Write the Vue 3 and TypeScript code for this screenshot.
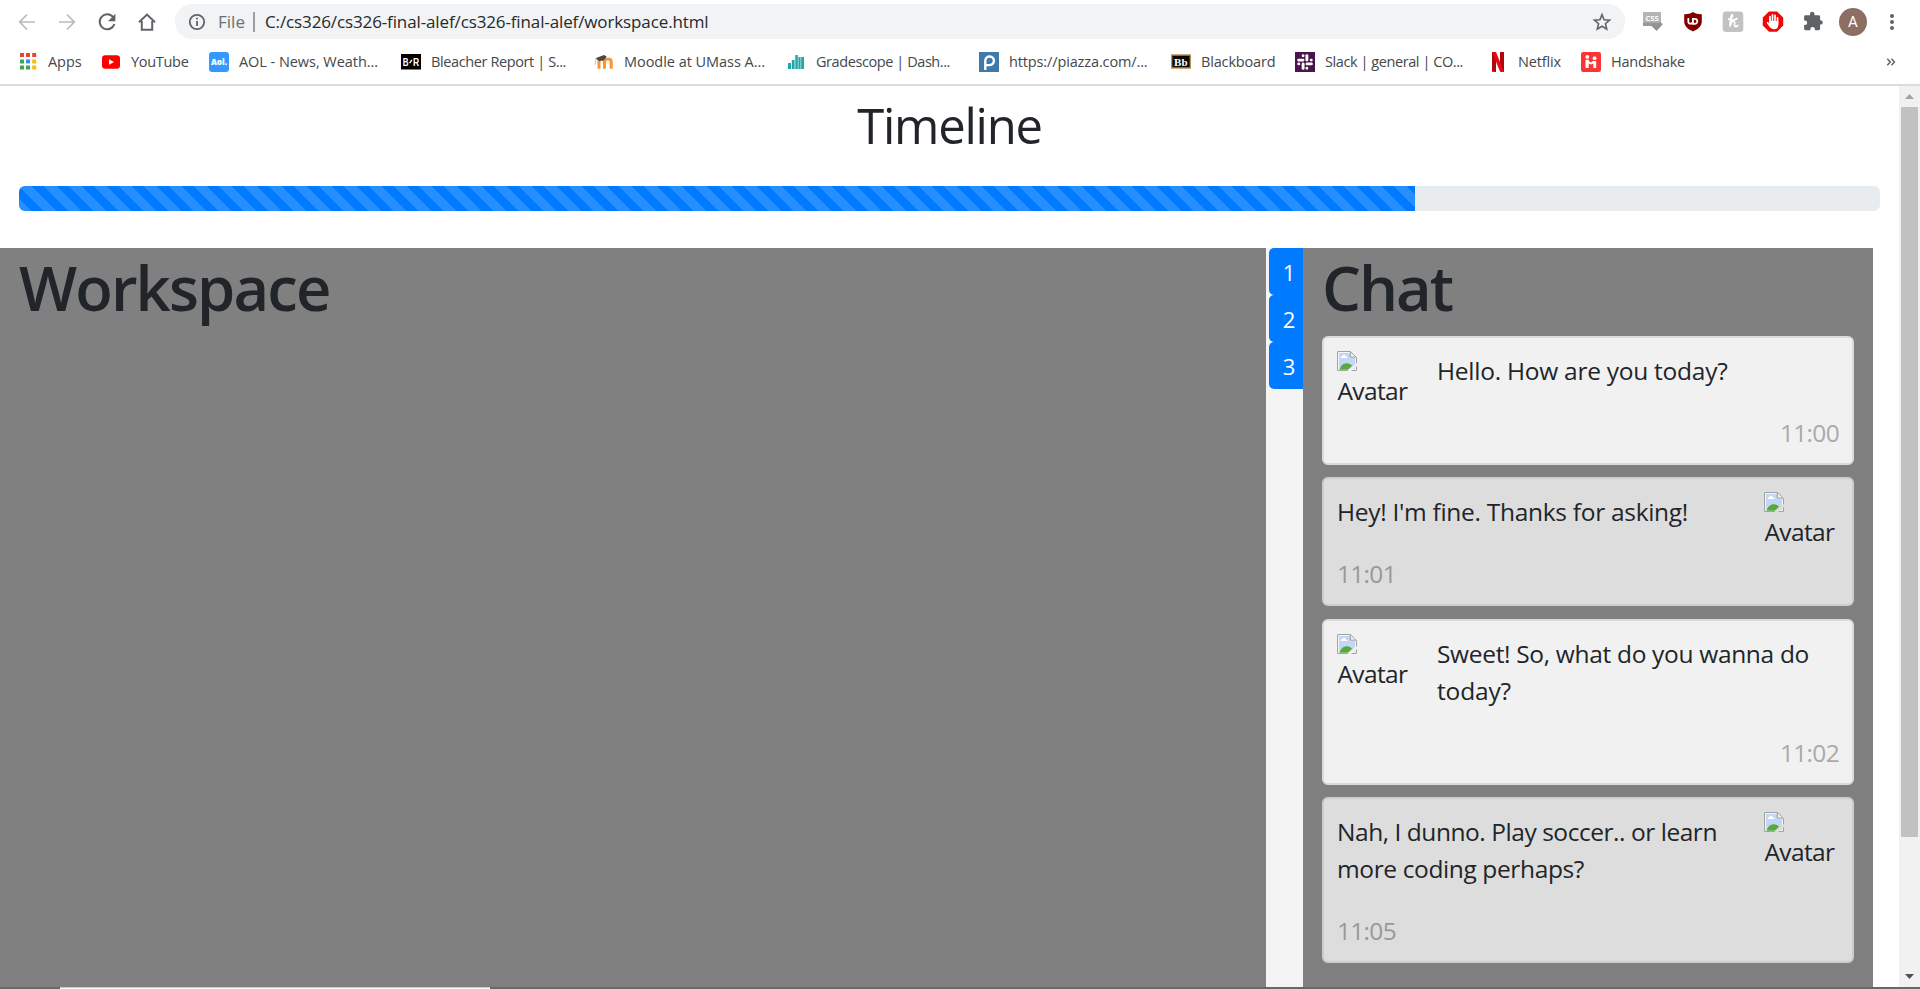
<script setup lang="ts">
interface Bookmark { icon: string; label: string; width: number }
interface Line { text: string; width: number }
interface Message { dark: boolean; time: string; lines: Line[] }

// Tracks the text so that the label occupies the given width.
const vFit = {
  mounted(el: HTMLElement, binding: { value: number }) {
    const natural = el.getBoundingClientRect().width
    const count = (el.textContent ?? '').trim().length
    el.style.letterSpacing = `${((binding.value - natural) / count).toFixed(3)}px`
  },
}

const bookmarks: Bookmark[] = [
  { icon: 'apps', label: 'Apps', width: 33.5 },
  { icon: 'youtube', label: 'YouTube', width: 57.5 },
  { icon: 'aol', label: 'AOL - News, Weath...', width: 139 },
  { icon: 'br', label: 'Bleacher Report | S...', width: 135 },
  { icon: 'moodle', label: 'Moodle at UMass A...', width: 141 },
  { icon: 'gradescope', label: 'Gradescope | Dash...', width: 134 },
  { icon: 'piazza', label: 'https://piazza.com/...', width: 138.5 },
  { icon: 'blackboard', label: 'Blackboard', width: 74.5 },
  { icon: 'slack', label: 'Slack | general | CO...', width: 138 },
  { icon: 'netflix', label: 'Netflix', width: 43 },
  { icon: 'handshake', label: 'Handshake', width: 74 },
]

const messages: Message[] = [
  { dark: false, time: '11:00', lines: [{ text: 'Hello. How are you today?', width: 290.5 }] },
  { dark: true, time: '11:01', lines: [{ text: "Hey! I'm fine. Thanks for asking!", width: 351 }] },
  {
    dark: false,
    time: '11:02',
    lines: [
      { text: 'Sweet! So, what do you wanna do', width: 372 },
      { text: 'today?', width: 74 },
    ],
  },
  {
    dark: true,
    time: '11:05',
    lines: [
      { text: 'Nah, I dunno. Play soccer.. or learn', width: 380 },
      { text: 'more coding perhaps?', width: 247 },
    ],
  },
]

const tabs = [1, 2, 3]
</script>

<template>
  <div class="window">
    <header class="chrome">
      <div class="toolbar">
        <nav class="nav">
          <svg viewBox="0 0 20 20" class="nav-icon off"><path d="M18 10H3M10 2.5L2.7 10l7.3 7.5" /></svg>
          <svg viewBox="0 0 20 20" class="nav-icon off"><path d="M2 10h15M10 2.5l7.3 7.5-7.3 7.5" /></svg>
          <svg viewBox="0 0 20 20" class="nav-icon"><path d="M16.200 5.200A7.500 7.500 0 1 0 17.400 12" /><path class="solid" d="M18.400 1.800v7.400H11z" /></svg>
          <svg viewBox="0 0 20 20" class="nav-icon"><path d="M2 10.200L10 2.600l8 7.600M4.800 9v8.800h10.400V9" /></svg>
        </nav>
        <div class="omnibox">
          <svg class="info" viewBox="0 0 18 18"><circle cx="9" cy="9" r="7.200" /><path d="M9 8v5M9 4.700v1.900" /></svg>
          <span class="scheme"><span v-fit="27">File</span></span>
          <span class="divider"></span>
          <span class="url"><span v-fit="443.5">C:/cs326/cs326-final-alef/cs326-final-alef/workspace.html</span></span>
          <svg class="star" viewBox="0 0 20 20"><path d="M10 2.600l2.100 5.100 5.500.4-4.200 3.600 1.300 5.400L10 14.200l-4.700 2.900 1.300-5.400-4.200-3.600 5.500-.4z" /></svg>
        </div>
        <div class="extensions">
          <svg viewBox="0 0 22 22"><path fill="#999" d="M1 1h18v12h-3v2H1z" /><path fill="#b5b5b5" d="M1 1h18v10.500H1z" /><text x="10" y="9.600" class="css-label">CSS</text><path d="M10.500 13.500l4 4 5-5.500" fill="none" stroke="#929292" stroke-width="3.400" /></svg>
          <svg viewBox="0 0 22 22"><path fill="#800000" d="M11 1c2.500 1.800 5.400 2.300 8.800 2.200v7.200c0 5-4.100 7.700-8.800 10-4.700-2.300-8.800-5-8.800-10V3.200c3.400.1 6.300-.4 8.800-2.200z" /><path fill="none" stroke="#fff" stroke-width="1.700" d="M6.300 7v3.400a2.300 2.300 0 0 0 4.600 0V7M11 7.800h1.800a2.500 2.500 0 0 1 0 5H11z" /></svg>
          <svg viewBox="0 0 22 22"><rect x=".7" y=".4" width="20.600" height="20.600" rx="3.500" fill="#c2c2c2" /><path fill="none" stroke="#fff" stroke-width="1.700" d="M6 8c3 .5 5-2 4.500-4C9.500 2.500 8 8 8 15.500c1-4 2.500-6 4-5.500s.2 3 .5 4.500 2.500 1.500 3.500-.5M8.500 9c3 .3 5-.3 7-1.800" /></svg>
          <svg viewBox="0 0 22 22"><path fill="#ed0707" d="M7 .4h8l6.200 6.200v8L15 20.800H7L.8 14.600v-8z" /><path fill="none" stroke="#fff" stroke-width="1.700" stroke-linecap="round" d="M8 12V5.500M10.500 11V3.800M13 11V4.300M15.500 13V6.800M8.300 15.300l-2.700-3.500" /><path fill="#fff" d="M7.200 10h9.100v4c0 2.800-1.500 4.300-4.200 4.300-2.500 0-3.800-1.400-4.900-3.300z" /></svg>
          <svg viewBox="0 0 22 22"><path fill="#5f6368" d="M8 4.300V3a2.200 2.200 0 0 1 4.400 0v1.300h4.300c.8 0 1.400.6 1.400 1.400v3.500h.5a2.200 2.200 0 0 1 0 4.400h-.5v4.200c0 .8-.6 1.400-1.400 1.400h-3.800v-.8a2.300 2.300 0 0 0-4.600 0v.8H3.500c-.8 0-1.400-.6-1.400-1.400V14h.8a2.300 2.300 0 0 0 0-4.600h-.8V5.700c0-.8.6-1.400 1.400-1.400z" /></svg>
        </div>
        <span class="profile">A</span>
        <span class="menu"><i></i><i></i><i></i></span>
      </div>

      <div class="bookmarks">
        <div v-for="b in bookmarks" :key="b.icon" class="bookmark">
          <svg viewBox="0 0 20 20" class="favicon">
            <g v-if="b.icon === 'apps'">
              <path fill="#ea4335" d="M2 1h4v4H2zM8 1h4v4H8zM14.200 1h4v4h-4z" />
              <path fill="#34a853" d="M2 7.400h4v4H2zM2 13.600h4v4H2zM8 13.600h4v4H8z" />
              <path fill="#4285f4" d="M8 7.400h4v4H8z" />
              <path fill="#fbbc05" d="M14.200 7.400h4v4h-4zM14.200 13.600h4v4h-4z" />
            </g>
            <g v-else-if="b.icon === 'youtube'"><rect x="1" y="3.200" width="18" height="13.600" rx="3.200" fill="#f00" /><path fill="#fff" d="M8 7.200l5 2.800-5 2.800z" /></g>
            <g v-else-if="b.icon === 'aol'"><rect width="20" height="20" rx="3" fill="#3399ff" /><text x="10" y="13" class="aol">Aol.</text></g>
            <g v-else-if="b.icon === 'br'"><path d="M0 2h20v15.500H0z" /><text x="1.800" y="13.700" class="br" textLength="5.800" lengthAdjust="spacingAndGlyphs">B</text><text x="12" y="13.700" class="br" textLength="6.200" lengthAdjust="spacingAndGlyphs">R</text><path stroke="#fff" stroke-width="1.400" d="M8.600 11.200l2.300-3.400" /></g>
            <g v-else-if="b.icon === 'moodle'"><path fill="none" stroke="#f7943a" stroke-width="3" d="M5 16.800V9.500c0-3 5.500-3 5.500 0v7.300M10.500 9.500c0-3.500 6.700-3.500 6.700 0v7.300" /><path fill="#484848" d="M1.500 6.300L10 3l2.700 1.500L10 8.300 5 9z" /><path d="M2 6.500L1 13" stroke="#dec3ae" /></g>
            <g v-else-if="b.icon === 'gradescope'" fill="#20a6a5"><path d="M2 11h3v6H2zM5.800 8h2.800v9H5.800zM9.300 3h2.500v14H9.300zM12.400 5h2.200v12h-2.200zM15.200 5h2.800v12h-2.800z" /></g>
            <g v-else-if="b.icon === 'piazza'"><path fill="#3e7aab" d="M0 0h20v20H0z" /><path fill="none" stroke="#fff" stroke-width="2.400" d="M6.300 18V8.600a4.300 4.300 0 1 1 4.300 4.500H6.400" /></g>
            <g v-else-if="b.icon === 'blackboard'"><path fill="#080808" stroke="#b8924c" stroke-width="1.300" d="M.7 3h18.600v13H.7z" /><text x="9.800" y="13.700" class="bb">Bb</text></g>
            <g v-else-if="b.icon === 'slack'">
              <path fill="#4a154b" d="M0 0h20v20H0z" />
              <path v-for="r in 4" :key="r" :transform="`rotate(${r * 90} 10 10)`" fill="none" stroke="#fff" stroke-width="2.900" stroke-linecap="round" d="M11.900 3.600V8M16.200 8.100h.1" />
            </g>
            <g v-else-if="b.icon === 'netflix'"><path fill="#b1060f" d="M4 0h4v20l-4-.3zM12 0h4v20l-4-.4z" /><path fill="#e50914" d="M4 0h4l8 20-4-.4z" /></g>
            <g v-else><rect width="20" height="20" rx="2.200" fill="#fb3434" /><g fill="#fff"><circle cx="6.300" cy="4.900" r="1.900" /><circle cx="13.600" cy="6.200" r="1.900" /><path d="M4.500 7.700h3.300v1.500l2.400 1.200 1.600-1.500h3.400V16h-2.900v-4.500l-2.100 1-2.500-1V16H4.500z" /></g></g>
          </svg>
          <span v-fit="b.width">{{ b.label }}</span>
        </div>
        <svg class="more" viewBox="0 0 10 10"><path d="M1.300 1.800L4.300 5l-3 3.200M5.400 1.800L8.400 5l-3 3.200" /></svg>
      </div>
    </header>

    <div class="viewport">
      <main class="page">
        <h1 class="timeline"><span v-fit="184.5">Timeline</span></h1>
        <div class="progress"><div class="bar"></div></div>
        <div class="columns">
          <section class="workspace"><h2><span v-fit="310.5">Workspace</span></h2></section>
          <aside class="tabs"><button v-for="t in tabs" :key="t">{{ t }}</button></aside>
          <section class="chat">
            <h2><span v-fit="130">Chat</span></h2>
            <article v-for="m in messages" :key="m.time" class="message" :class="{ dark: m.dark }">
              <figure class="avatar">
                <svg viewBox="0 0 20 20">
                  <path fill="#fff" stroke="#9a9a9a" d="M.6.6h13l5.800 5.800v13H.6z" />
                  <path fill="#c3d6f6" d="M2 2h11v5h5v11H2z" />
                  <path fill="#fff" d="M3.500 7c0-1.600 1.500-2 2-2 .8-2 3.300-1.300 3.100.5 1.400 0 1.900.5 1.900 1.500z" />
                  <path fill="#57ab3b" d="M2.500 18.700c1-3.700 3.700-6.500 7.200-6.500 2.500 0 4.300 1.200 5.300 2.600l-4 3.900z" />
                  <path class="gap" d="M11.500 20.500L20.500 13" />
                  <path fill="#eee" stroke="#9a9a9a" d="M13.300.8v5.400h5.500" />
                </svg>
                <figcaption><span v-fit="70">Avatar</span></figcaption>
              </figure>
              <p><span v-for="l in m.lines" :key="l.text" class="line"><span v-fit="l.width">{{ l.text }}</span></span></p>
              <time><span v-fit="59">{{ m.time }}</span></time>
            </article>
          </section>
        </div>
      </main>
      <div class="scrollbar">
        <svg viewBox="0 0 21 21"><path fill="#a3a3a3" d="M6 13h9l-4.500-5z" /></svg>
        <div class="thumb"></div>
        <svg viewBox="0 0 21 21"><path fill="#505050" d="M6 8h9l-4.500 5z" /></svg>
      </div>
    </div>
    <footer class="taskbar"><div class="task"></div></footer>
  </div>
</template>

<style>
body { overflow: hidden; }
</style>

<style scoped>
* { box-sizing: border-box; }
.window { width: 1920px; height: 989px; display: flex; flex-direction: column; overflow: hidden; background: #fff; font-family: "Open Sans", "Noto Sans", sans-serif; color: #212529; }
.window span { white-space: nowrap; }
.chrome { height: 86px; flex: none; border-bottom: 2px solid #dadce0; }
.toolbar { height: 43px; display: flex; align-items: center; }
.nav { display: flex; gap: 20px; width: 175px; padding-left: 17px; }
.nav-icon { width: 20px; height: 20px; fill: none; stroke: #5f6368; stroke-width: 2; }
.nav-icon.off { stroke: #bababa; stroke-width: 1.7; }
.nav-icon .solid { fill: #5f6368; stroke: none; }
.omnibox { display: flex; align-items: center; width: 1450px; height: 35px; border-radius: 18px; background: #f1f3f4; font-size: 17px; line-height: 33px; padding-left: 13px; }
.info { width: 18px; height: 18px; fill: none; stroke: #5f6368; stroke-width: 1.8; }
.scheme { width: 36px; margin-left: 12px; color: #6b6f74; }
.divider { width: 2px; height: 20px; background: #9aa0a6; margin-right: 10px; margin-left: -1px; }
.url { flex: 1; color: #27292c; }
.star { width: 20px; height: 20px; margin-right: 13px; fill: none; stroke: #5f6368; stroke-width: 1.6; }
.extensions { display: flex; gap: 18px; margin-left: 17px; }
.extensions svg { width: 22px; height: 22px; }
.css-label { font: bold 7.5px "Open Sans", sans-serif; fill: #fff; text-anchor: middle; }
.profile { width: 28px; height: 28px; margin-left: 15px; border-radius: 50%; background: #8d6e63; color: #fff; font: 15px/29px Roboto, sans-serif; text-align: center; }
.menu { margin-left: 23px; display: grid; gap: 2px; }
.menu i { width: 4px; height: 4px; border-radius: 50%; background: #5f6368; }
.bookmarks { height: 38px; padding-left: 18px; display: grid; align-items: center; grid-template-columns: 83px 108px 192px 193px 192px 193px 192px 124px 193px 93px 305px auto; font-size: 14.5px; line-height: 20px; color: #44474b; }
.bookmark { display: flex; align-items: center; gap: 10px; }
.favicon { width: 20px; height: 20px; flex: none; }
.aol { font: 800 8.2px "Open Sans", sans-serif; fill: #fff; text-anchor: middle; }
.br { font: bold 11px "Liberation Sans", sans-serif; fill: #fff; }
.bb { font: bold 11px "Liberation Serif", serif; fill: #fff; text-anchor: middle; }
.more { width: 10px; height: 10px; fill: none; stroke: #5f6368; stroke-width: 1.5; }
.viewport { flex: 1; min-height: 0; display: flex; }
.page { width: 1899px; display: flex; flex-direction: column; }
.timeline { margin: 9px 0 0; height: 91px; font-size: 49px; line-height: 60px; font-weight: 400; text-align: center; }
.progress { flex: none; width: 1861px; height: 25px; margin-left: 19px; border-radius: 6px; overflow: hidden; background: #e9ecef; }
.bar { width: 75%; height: 25px; background-color: #007bff; background-image: linear-gradient(45deg, rgba(255,255,255,.15) 25%, transparent 25%, transparent 50%, rgba(255,255,255,.15) 50%, rgba(255,255,255,.15) 75%, transparent 75%, transparent); background-size: 25px 25px; }
.columns { flex: 1; min-height: 0; margin-top: 37px; display: flex; width: 1873px; }
h2 { margin: 0; font-size: 61.5px; line-height: 75px; font-weight: 600; }
.workspace { width: 1266px; padding: 2px 19px; background: #808080; }
.tabs { width: 37px; padding-left: 3px; background: #f4f4f4; display: flex; flex-direction: column; }
.tabs button { width: 34px; height: 47px; padding: 2px 0 0 6px; border: 0; border-radius: 5px 0 0 5px; background: #007bff; color: #fff; font: 22px/45px "Open Sans", sans-serif; }
.chat { width: 570px; padding: 2px 19px 0; background: #808080; }
.chat h2 { margin-bottom: 11px; }
.message { display: flow-root; width: 532px; margin-bottom: 12.5px; padding: 13px 13px 11.75px; border: 2px solid #dadada; border-radius: 6px; background: #f1f1f1; font-size: 24.5px; line-height: 37.5px; }
.message:last-child { padding-bottom: 11px; }
.message.dark { background: #ddd; border-color: #ccc; }
.avatar { float: left; width: 75px; height: 60px; margin: 0 25px 0 0; }
.dark .avatar { float: right; margin: 0 0 0 25px; }
.avatar svg { display: block; width: 20px; height: 20px; }
.gap { stroke: #f1f1f1; stroke-width: 2.5; }
.dark .gap { stroke: #ddd; }
.avatar figcaption { line-height: 40px; padding-left: .5px; }
p { margin: 0 0 24px; padding-top: 1px; }
.line { display: block; height: 37.5px; }
.dark .line + .line { line-height: 36px; }
time { float: right; height: 37.5px; color: #aaa; }
.dark time { float: left; color: #999; }
.scrollbar { width: 21px; background: #f1f1f1; display: flex; flex-direction: column; align-items: center; }
.scrollbar svg { width: 21px; height: 21px; flex: none; }
.thumb { width: 17px; height: 730px; margin-bottom: auto; background: #c1c1c1; }
.taskbar { height: 2px; flex: none; padding-left: 60px; background: #686868; }
.task { width: 430px; height: 2px; background: #fff; border-top: 1px solid #c9c9c9; }
</style>
